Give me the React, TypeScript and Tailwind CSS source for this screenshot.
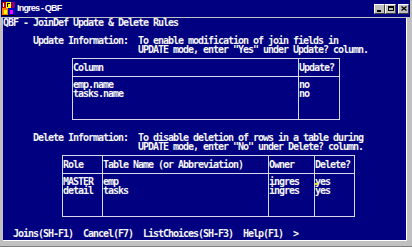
import React from "react";

const T =
  "font-['DejaVu_Sans_Mono','Liberation_Mono',monospace] text-[10px] leading-[9px] tracking-[-1.02px] font-bold whitespace-pre text-[#f4f4f4]";

function Icon() {
  return (
    <svg width="13" height="14" viewBox="0 0 13 14" className="shrink-0">
      <rect x="0" y="0" width="13" height="14" fill="#ffffff" />
      <rect x="0" y="0" width="4" height="6" fill="#c00000" />
      <rect x="4" y="0" width="5" height="6" fill="#ffff00" />
      <rect x="9" y="0" width="4" height="6" fill="#800080" />
      <rect x="1" y="1" width="1" height="4" fill="#ffffff" />
      <rect x="5" y="1" width="3" height="1" fill="#000000" />
      <rect x="5" y="1" width="1" height="4" fill="#000000" />
      <rect x="0" y="6" width="6" height="8" fill="#ff8000" />
      <rect x="6" y="6" width="7" height="8" fill="#0000c0" />
      <rect x="2" y="8" width="3" height="4" fill="#ffff00" />
      <rect x="8" y="8" width="3" height="4" fill="#ff00ff" />
      <rect x="0" y="13" width="13" height="1" fill="#000000" />
    </svg>
  );
}

function Btn({ children, className = "" }: { children: React.ReactNode; className?: string }) {
  return (
    <div
      className={
        "w-[11px] h-[10px] bg-[#c0c0c0] border-t border-l border-t-white border-l-white border-r border-b border-r-[#404040] border-b-[#404040] flex items-center justify-center " +
        className
      }
    >
      {children}
    </div>
  );
}

export default function App() {
  return (
    <div className="w-[412px] h-[247px] bg-[#c0c0c0] border-b border-b-[#808080] flex flex-col overflow-hidden">
      {/* Title bar */}
      <div className="h-[17px] ml-[1px] mr-[2px] bg-[#000080] flex items-center pl-[1px]">
        <Icon />
        <span className="ml-[2px] text-white text-[9px] font-bold tracking-[-0.8px] font-['Liberation_Sans',Arial,sans-serif] leading-none">
          Ingres - QBF
        </span>
        <div className="ml-auto mr-[1px] flex items-center">
          <Btn>
            <div className="w-[4px] h-[2px] bg-black mt-[4px] -ml-[2px]" />
          </Btn>
          <Btn>
            <div className="w-[6px] h-[5px] border border-black border-t-2" />
          </Btn>
          <Btn className="ml-[2px]">
            <svg width="6" height="5" viewBox="0 0 6 5">
              <path d="M0.5 0.5 L5.5 4.5 M5.5 0.5 L0.5 4.5" stroke="#000" strokeWidth="1.3" />
            </svg>
          </Btn>
        </div>
      </div>

      {/* Client area */}
      <div className="mt-[1px] ml-[3px] w-[404px] h-[223px] bg-[#000080] border-r border-b border-white flex flex-col">
        <div className={T}>
          {"QBF - JoinDef Update & Delete Rules\n\n      Update Information:  To enable modification of join fields in\n                           UPDATE mode, enter \"Yes\" under Update? column."}
        </div>

        {/* Table 1 */}
        <div className="mt-[4px] ml-[69px] w-[268px] border border-[#d8d8e8] flex">
          <div className="w-[226px] border-r border-[#d8d8e8] flex flex-col">
            <div className={T + " h-[17px] flex items-center"}>Column</div>
            <div className={T + " h-[43px] border-t border-[#d8d8e8] pt-[3px]"}>{"emp.name\ntasks.name"}</div>
          </div>
          <div className="flex-1 flex flex-col">
            <div className={T + " h-[17px] flex items-center"}>Update?</div>
            <div className={T + " h-[43px] border-t border-[#d8d8e8] pt-[3px]"}>{"no\nno"}</div>
          </div>
        </div>

        <div className={T + " mt-[13px]"}>
          {"      Delete Information:  To disable deletion of rows in a table during\n                           UPDATE mode, enter \"No\" under Delete? column."}
        </div>

        {/* Table 2 */}
        <div className="mt-[4px] ml-[59px] w-[293px] border border-[#d8d8e8] flex">
          <div className="w-[40px] border-r border-[#d8d8e8] flex flex-col">
            <div className={T + " h-[17px] flex items-center"}>Role</div>
            <div className={T + " h-[43px] border-t border-[#d8d8e8] pt-[3px]"}>{"MASTER\ndetail"}</div>
          </div>
          <div className="w-[166px] border-r border-[#d8d8e8] flex flex-col">
            <div className={T + " h-[17px] flex items-center"}>Table Name (or Abbreviation)</div>
            <div className={T + " h-[43px] border-t border-[#d8d8e8] pt-[3px]"}>{"emp\ntasks"}</div>
          </div>
          <div className="w-[46px] border-r border-[#d8d8e8] flex flex-col">
            <div className={T + " h-[17px] flex items-center"}>Owner</div>
            <div className={T + " h-[43px] border-t border-[#d8d8e8] pt-[3px]"}>{"ingres\ningres"}</div>
          </div>
          <div className="flex-1 flex flex-col">
            <div className={T + " h-[17px] flex items-center"}>Delete?</div>
            <div className={T + " h-[43px] border-t border-[#d8d8e8] pt-[3px] relative"}>
              {"yes\nyes"}
              <span className="absolute left-[0px] top-[9px] w-[3px] h-[2px] bg-[#e0e000]" />
            </div>
          </div>
        </div>

        <div className={T + " mt-[12px]"}>
          {"  Joins(SH-F1)  Cancel(F7)  ListChoices(SH-F3)  Help(F1)  >"}
        </div>
      </div>
    </div>
  );
}
